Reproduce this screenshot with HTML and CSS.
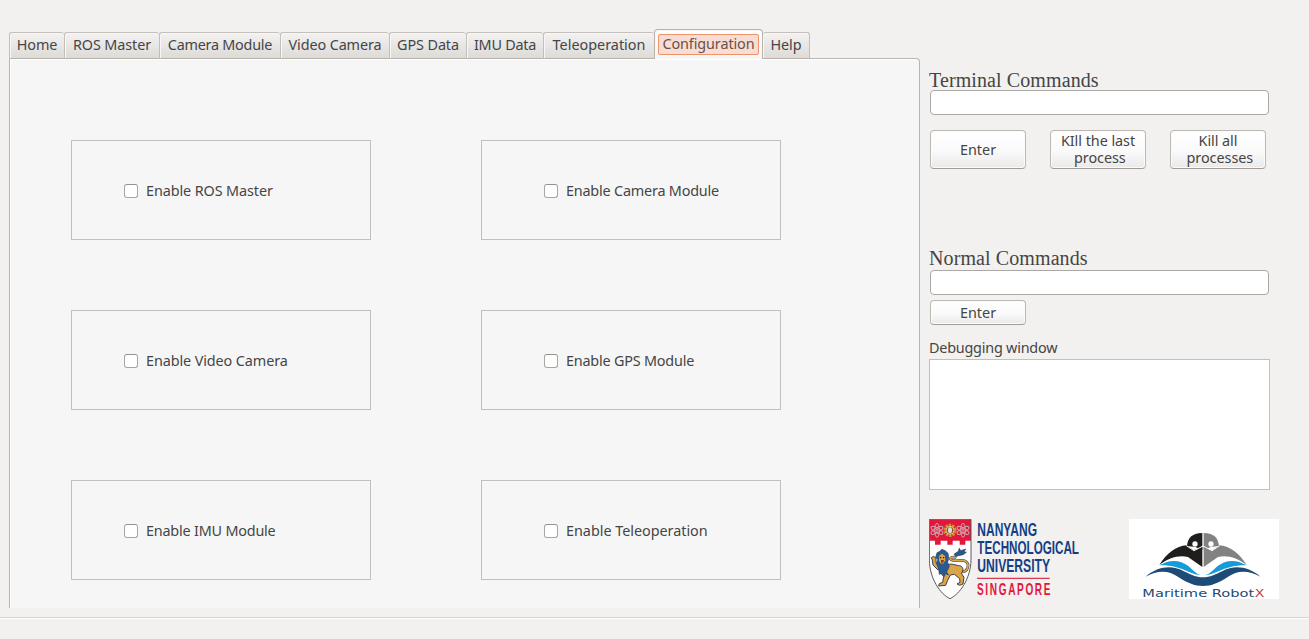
FILE: index.html
```html
<!DOCTYPE html>
<html lang="en">
<head>
<meta charset="utf-8">
<title>Robot control</title>
<link rel="stylesheet" href="styles.css">
</head>
<body>
<div class="window">
  <main class="notebook">
    <nav class="tabs">
      <span class="tab tab-home">Home</span>
      <span class="tab tab-ros">ROS Master</span>
      <span class="tab tab-camera">Camera Module</span>
      <span class="tab tab-video">Video Camera</span>
      <span class="tab tab-gps">GPS Data</span>
      <span class="tab tab-imu">IMU Data</span>
      <span class="tab tab-teleop">Teleoperation</span>
      <span class="tab tab-config active"><span class="focus">Configuration</span></span>
      <span class="tab tab-help">Help</span>
    </nav>
    <section class="page">
      <label class="option"><input type="checkbox" class="check"><span>Enable ROS Master</span></label>
      <label class="option wide tight"><input type="checkbox" class="check"><span>Enable Camera Module</span></label>
      <label class="option"><input type="checkbox" class="check"><span>Enable Video Camera</span></label>
      <label class="option wide tight"><input type="checkbox" class="check"><span>Enable GPS Module</span></label>
      <label class="option tight"><input type="checkbox" class="check"><span>Enable IMU Module</span></label>
      <label class="option wide loose"><input type="checkbox" class="check"><span>Enable Teleoperation</span></label>
    </section>
  </main>
  <aside class="side">
    <h2 class="heading">Terminal Commands</h2>
    <input class="entry" type="text">
    <div class="buttons">
      <button class="button tall">Enter</button>
      <button class="button tall two-line">KIll the last<br>&nbsp;process</button>
      <button class="button tall two-line">Kill all<br>&nbsp;processes</button>
    </div>
    <h2 class="heading normal">Normal Commands</h2>
    <input class="entry" type="text">
    <button class="button short">Enter</button>
    <div class="debug-label">Debugging window</div>
    <div class="debug"></div>
    <div class="logos">
      <svg class="ntu" viewBox="27 27 453 243">
        <defs><clipPath id="shield"><path d="M28 28H153V150C152 205 120 252 90 266C60 252 29 205 28 150Z"/></clipPath></defs>
        <path d="M28 28H153V150C152 205 120 252 90 266C60 252 29 205 28 150Z" fill="#fff"/>
        <g clip-path="url(#shield)">
          <path d="M28 28H153V92H136V104H119V92H98V104H82V92H62V104H45V92H28Z" fill="#e2173c"/>
        </g>
        <g fill="none" stroke="#d0a9ae" stroke-width="3">
          <g id="atom"><ellipse cx="51" cy="61" rx="7" ry="21"/><ellipse cx="51" cy="61" rx="7" ry="20" transform="rotate(60 51 61)"/><ellipse cx="51" cy="61" rx="7" ry="20" transform="rotate(-60 51 61)"/><circle cx="51" cy="61" r="3" fill="#6b3540"/></g>
          <use href="#atom" x="78"/>
        </g>
        <circle cx="90" cy="61" r="16" fill="none" stroke="#c9923c" stroke-width="8" stroke-dasharray="7 3"/>
        <circle cx="90" cy="61" r="12" fill="#8a5a28" stroke="#f0cb62" stroke-width="3"/>
        <ellipse cx="90" cy="61" rx="6" ry="9" fill="#d9dfdf"/>
        <path d="M119 185C143 190 151 164 137 154C124 146 104 158 93 149C86 143 99 139 109 143" fill="none" stroke="#3a3e50" stroke-width="8"/>
        <path d="M119 185C143 190 151 164 137 154C124 146 104 158 93 149C86 143 99 139 109 143" fill="none" stroke="#dda64b" stroke-width="5"/>
        <path d="M102 133L115 124L118 115L122 122L137 117L132 125L139 127L129 134L107 139Z" fill="#28598d" stroke="#263a58" stroke-width="2"/>
        <path d="M79 165C94 158 108 167 119 167C130 170 132 181 124 190L132 202L129 222L119 226L111 222L120 217L119 206L103 193L91 195L83 211L77 226L56 228L58 221L68 217L71 199L59 186L62 168Z" fill="#dba447" stroke="#3e4050" stroke-width="3" stroke-linejoin="round"/>
        <path d="M54 180L39 165L37 150L34 143L40 139L48 144L48 158L60 169Z" fill="#dba447" stroke="#3e4050" stroke-width="3"/>
        <path d="M51 128L60 124L65 118L76 122L84 130L86 145L83 158L88 169L80 186L86 195L77 191L72 200L66 190L58 193L56 176L49 160L54 149L47 142Z" fill="#285b91" stroke="#294060" stroke-width="2"/>
        <path d="M58 137L66 131L75 138L76 151L69 162L61 160L57 151Z" fill="#dba447"/>
        <path d="M63 150H72L69 160H64Z" fill="#8d382c"/><circle cx="62" cy="143" r="2"/><circle cx="71" cy="143" r="2"/>
        <path d="M28 28H153V150C152 205 120 252 90 266C60 252 29 205 28 150Z" fill="none" stroke="#595a5d" stroke-width="3"/>
        <g class="ntu-name" fill="#143f86">
          <text x="172" y="77" textLength="179" lengthAdjust="spacingAndGlyphs">NANYANG</text>
          <text x="172" y="131" textLength="305" lengthAdjust="spacingAndGlyphs">TECHNOLOGICAL</text>
          <text x="172" y="186" textLength="218" lengthAdjust="spacingAndGlyphs">UNIVERSITY</text>
        </g>
        <path d="M171 205H389" stroke="#dc3650" stroke-width="3.5"/>
        <g class="ntu-place" fill="#e2173c" transform="translate(171 256) scale(.63 1)"><text x="0" y="0" textLength="350">SINGAPORE</text></g>
      </svg>
      <svg class="robotx" viewBox="27 27 450 240">
        <path d="M27 27H477V267H27Z" fill="#fff"/>
        <path d="M247 69V120L226 111L201 108C203 84 215 70 247 69Z" fill="#201d1d"/>
        <path d="M251 69V120L272 111L297 108C295 84 283 70 251 69Z" fill="#828282"/>
        <path d="M118 165C140 130 168 108 200 106L221 121L247 110V171L204 141C174 134 146 145 118 165Z" fill="#201d1d"/>
        <path d="M380 165C358 130 330 108 298 106L277 121L251 110V171L294 141C324 134 352 145 380 165Z" fill="#828282"/>
        <path d="M199 107L222 122L249 108L276 122L299 107" fill="none" stroke="#fff" stroke-width="3"/>
        <circle cx="225" cy="102" r="8" fill="#fff"/><circle cx="273" cy="102" r="8" fill="#fff"/>
        <path d="M119 166C151 146 182 151 205 168C218 179 226 190 241 195C207 194 183 164 119 166Z" fill="#159bdc"/>
        <path d="M379 166C347 146 316 151 293 168C280 179 272 190 257 195C291 194 315 164 379 166Z" fill="#159bdc"/>
        <path d="M77 200C112 170 154 164 190 183C213 194 227 202 249 202C271 202 285 194 308 183C344 164 386 170 421 200C386 181 354 179 323 201C299 218 273 228 249 228C225 228 199 218 175 201C144 179 112 181 77 200Z" fill="#1e4b76"/>
        <g class="robotx-name"><text x="67" y="262" textLength="336" lengthAdjust="spacingAndGlyphs" fill="#1e4b76">Maritime Robot</text><text x="404" y="262" textLength="29" lengthAdjust="spacingAndGlyphs" fill="#c93a34">X</text></g>
      </svg>
    </div>
  </aside>
</div>
<footer class="status"></footer>
</body>
</html>
```
FILE: styles.css
```css
* { box-sizing: border-box; }
body {
  margin: 0;
  height: 639px;
  overflow: hidden;
  background: #f2f1ef;
  color: #454545;
  font: 14.4px/17px "Noto Sans", sans-serif;
  letter-spacing: -.1px;
}
.window { display: flex; height: 617px; padding: 29px 0 9px 9px; }
.notebook { width: 911px; display: flex; flex-direction: column; }
.tabs { display: flex; align-items: flex-end; height: 30px; margin-bottom: -1px; z-index: 1; }
.tab {
  display: flex;
  justify-content: center;
  align-items: center;
  height: 27px;
  padding-bottom: 2px;
  border: 1px solid #c3c0bc;
  border-right-width: 0;
  border-bottom-color: #b8b2aa;
  border-radius: 3px 3px 0 0;
  background: linear-gradient(#f3f2f1, #dddbd8);
  box-shadow: inset 1px 1px #f8f7f6;
  white-space: nowrap;
}
.tab-home { width: 55px; }
.tab-ros { width: 95px; }
.tab-camera { width: 121px; letter-spacing: -.25px; }
.tab-video { width: 109px; }
.tab-gps { width: 77px; }
.tab-imu { width: 77px; letter-spacing: -.25px; }
.tab-teleop { width: 111px; letter-spacing: 0; }
.tab-config { width: 109px; }
.tab-help { width: 47px; border-right-width: 1px; border-left-width: 0; }
.tab.active {
  height: 30px;
  border: 1px solid #b8b2aa;
  border-bottom: 0;
  border-radius: 4px 4px 0 0;
  background: linear-gradient(#fff, #f6f6f6);
  padding-bottom: 1px;
}
.focus {
  width: 101px;
  height: 21px;
  border: 1px solid #f0936b;
  border-radius: 2px;
  background: #f7ddd3;
  color: #6b504a;
  text-align: center;
  line-height: 18px;
}
.page {
  flex: 1;
  display: grid;
  grid-template-columns: 300px 300px;
  grid-auto-rows: 100px;
  gap: 70px 110px;
  padding: 81px 0 0 61px;
  border: 1px solid #b8b5b0;
  border-bottom: 0;
  border-radius: 0 4px 0 0;
  box-shadow: inset 1px 1px #fff;
  background: #f6f6f6;
}
.option { display: flex; align-items: center; gap: 8px; padding: 1px 0 0 52px; border: 1px solid #c1c0bd; }
.wide { padding-left: 62px; }
.tight { letter-spacing: -.2px; }
.loose { letter-spacing: -.03px; }
.check {
  appearance: none;
  width: 14px;
  height: 14px;
  margin: 0;
  border: 1px solid #a9a5a1;
  border-top-color: #96918d;
  border-radius: 3px;
  background: #fff;
}
.side { width: 350px; padding: 41px 0 0 10px; margin-left: -1px; display: flex; flex-direction: column; }
.heading { margin: 0; height: 20px; font: 400 20px/20px "Liberation Serif", serif; letter-spacing: .1px; }
.normal { margin-top: 79px; }
.entry {
  flex: none;
  width: 339px;
  height: 25px;
  margin: 0 0 0 1px;
  padding: 0 5px;
  border: 1px solid #aaa8a5;
  border-radius: 4px;
  background: #fff;
}
.normal + .entry { margin-top: 2px; }
.buttons { display: flex; gap: 24px; margin: 15px 0 0 1px; }
.button {
  flex: none;
  width: 96px;
  padding: 0;
  border: 1px solid #bcb9b5;
  border-bottom-color: #a09d99;
  border-radius: 4px;
  background: linear-gradient(#fff, #fafafa 55%, #eae9e8);
  box-shadow: inset 0 0 0 1px #fbfbfb;
  color: #454545;
  font: inherit;
  letter-spacing: 0;
  white-space: nowrap;
}
.tall { height: 39px; }
.two-line { padding-bottom: 2px; letter-spacing: -.05px; }
.short { height: 25px; margin: 5px 0 0 1px; }
.debug-label { margin-top: 14px; height: 20px; letter-spacing: -.22px; }
.debug { flex: none; width: 341px; height: 131px; border: 1px solid #c1c0bd; background: #fff; }
.logos { display: flex; gap: 49px; margin-top: 29px; }
.ntu { width: 151px; height: 81px; flex: none; }
.robotx { width: 150px; height: 80px; flex: none; }
.ntu-name { font: 700 54px "Liberation Sans", sans-serif; letter-spacing: 0; }
.ntu-place { font: 700 48px "Liberation Sans", sans-serif; letter-spacing: 0; }
.robotx-name { font: 32px "DejaVu Sans", sans-serif; letter-spacing: 0; }
.status { height: 22px; border-top: 1px solid #d6d4d1; box-shadow: inset 0 1px #fff; }
```
